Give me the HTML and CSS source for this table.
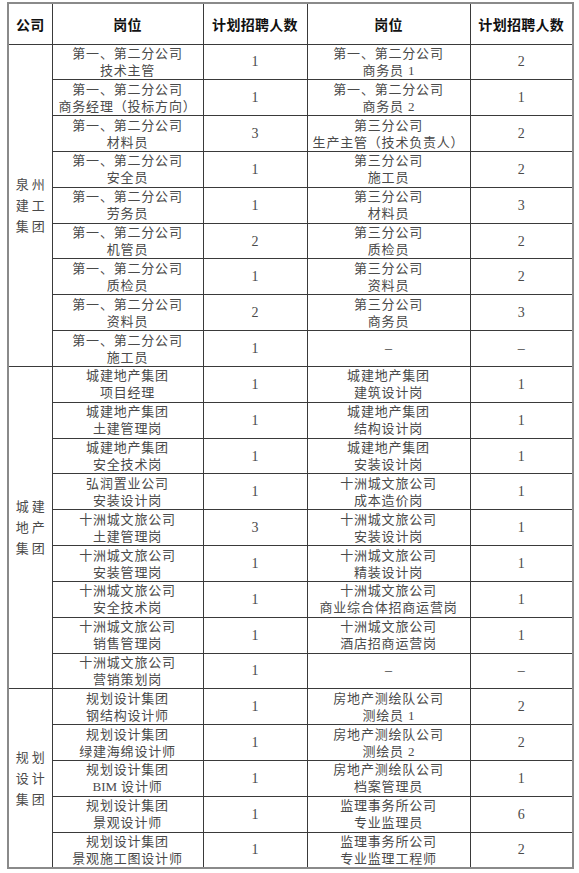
FILE: index.html
```html
<!DOCTYPE html>
<html lang="zh">
<head>
<meta charset="utf-8">
<title>招聘计划</title>
<link rel="stylesheet" href="styles.css">
</head>
<body>
<table class="plan">
  <colgroup>
    <col class="c-co"><col class="c-pos"><col class="c-num"><col class="c-pos2"><col class="c-num2">
  </colgroup>
  <thead>
    <tr class="head">
      <th>公司</th><th>岗位</th><th>计划招聘人数</th><th>岗位</th><th>计划招聘人数</th>
    </tr>
  </thead>
  <tbody>
    <tr>
      <td class="group" rowspan="9">泉州<br>建工<br>集团</td>
      <td>第一、第二分公司<br>技术主管</td><td class="num">1</td>
      <td>第一、第二分公司<br>商务员 <span class="d">1</span></td><td class="num">2</td>
    </tr>
    <tr>
      <td>第一、第二分公司<br>商务经理（投标方向）</td><td class="num">1</td>
      <td>第一、第二分公司<br>商务员 <span class="d">2</span></td><td class="num">1</td>
    </tr>
    <tr>
      <td>第一、第二分公司<br>材料员</td><td class="num">3</td>
      <td>第三分公司<br>生产主管（技术负责人）</td><td class="num">2</td>
    </tr>
    <tr>
      <td>第一、第二分公司<br>安全员</td><td class="num">1</td>
      <td>第三分公司<br>施工员</td><td class="num">2</td>
    </tr>
    <tr>
      <td>第一、第二分公司<br>劳务员</td><td class="num">1</td>
      <td>第三分公司<br>材料员</td><td class="num">3</td>
    </tr>
    <tr>
      <td>第一、第二分公司<br>机管员</td><td class="num">2</td>
      <td>第三分公司<br>质检员</td><td class="num">2</td>
    </tr>
    <tr>
      <td>第一、第二分公司<br>质检员</td><td class="num">1</td>
      <td>第三分公司<br>资料员</td><td class="num">2</td>
    </tr>
    <tr>
      <td>第一、第二分公司<br>资料员</td><td class="num">2</td>
      <td>第三分公司<br>商务员</td><td class="num">3</td>
    </tr>
    <tr>
      <td>第一、第二分公司<br>施工员</td><td class="num">1</td>
      <td class="num">–</td><td class="num">–</td>
    </tr>

    <tr>
      <td class="group" rowspan="9">城建<br>地产<br>集团</td>
      <td>城建地产集团<br>项目经理</td><td class="num">1</td>
      <td>城建地产集团<br>建筑设计岗</td><td class="num">1</td>
    </tr>
    <tr>
      <td>城建地产集团<br>土建管理岗</td><td class="num">1</td>
      <td>城建地产集团<br>结构设计岗</td><td class="num">1</td>
    </tr>
    <tr>
      <td>城建地产集团<br>安全技术岗</td><td class="num">1</td>
      <td>城建地产集团<br>安装设计岗</td><td class="num">1</td>
    </tr>
    <tr>
      <td>弘润置业公司<br>安装设计岗</td><td class="num">1</td>
      <td>十洲城文旅公司<br>成本造价岗</td><td class="num">1</td>
    </tr>
    <tr>
      <td>十洲城文旅公司<br>土建管理岗</td><td class="num">3</td>
      <td>十洲城文旅公司<br>安装设计岗</td><td class="num">1</td>
    </tr>
    <tr>
      <td>十洲城文旅公司<br>安装管理岗</td><td class="num">1</td>
      <td>十洲城文旅公司<br>精装设计岗</td><td class="num">1</td>
    </tr>
    <tr>
      <td>十洲城文旅公司<br>安全技术岗</td><td class="num">1</td>
      <td>十洲城文旅公司<br>商业综合体招商运营岗</td><td class="num">1</td>
    </tr>
    <tr>
      <td>十洲城文旅公司<br>销售管理岗</td><td class="num">1</td>
      <td>十洲城文旅公司<br>酒店招商运营岗</td><td class="num">1</td>
    </tr>
    <tr>
      <td>十洲城文旅公司<br>营销策划岗</td><td class="num">1</td>
      <td class="num">–</td><td class="num">–</td>
    </tr>

    <tr>
      <td class="group" rowspan="5">规划<br>设计<br>集团</td>
      <td>规划设计集团<br>钢结构设计师</td><td class="num">1</td>
      <td>房地产测绘队公司<br>测绘员 <span class="d">1</span></td><td class="num">2</td>
    </tr>
    <tr>
      <td>规划设计集团<br>绿建海绵设计师</td><td class="num">1</td>
      <td>房地产测绘队公司<br>测绘员 <span class="d">2</span></td><td class="num">2</td>
    </tr>
    <tr>
      <td>规划设计集团<br><span class="d">BIM</span> 设计师</td><td class="num">1</td>
      <td>房地产测绘队公司<br>档案管理员</td><td class="num">1</td>
    </tr>
    <tr>
      <td>规划设计集团<br>景观设计师</td><td class="num">1</td>
      <td>监理事务所公司<br>专业监理员</td><td class="num">6</td>
    </tr>
    <tr>
      <td>规划设计集团<br>景观施工图设计师</td><td class="num">1</td>
      <td>监理事务所公司<br>专业监理工程师</td><td class="num">2</td>
    </tr>
  </tbody>
</table>
</body>
</html>
```

FILE: styles.css
```css
html, body {
  background: #ffffff;
}
body {
  margin: 2px 0 0 7px;
  font-family: "Liberation Serif", "Noto Sans CJK SC", serif;
}
.plan {
  border-collapse: collapse;
  table-layout: fixed;
  width: 565px;
  border: 2px solid #8a8a8a;
}
.c-co { width: 44px; }
.c-pos { width: 151px; }
.c-num { width: 104px; }
.c-pos2 { width: 163px; }
.c-num2 { width: 103px; }

.plan th,
.plan td {
  border: 1px solid #3a3a3a;
  padding: 0;
  text-align: center;
  vertical-align: middle;
  overflow: hidden;
}
.head {
  height: 41px;
}
.head th {
  font-family: "Liberation Serif", "Noto Sans CJK SC", serif;
  font-weight: 700;
  font-size: 14px;
  letter-spacing: 0.3px;
  color: #111111;
  border-top: 2px solid #8a8a8a;
}
.plan tbody tr {
  height: 35.83px;
}
.plan td {
  font-size: 13px;
  line-height: 17px;
  letter-spacing: 0.8px;
  color: #4a4a4a;
}
.plan td.num {
  font-size: 14px;
  letter-spacing: 0;
}
.plan td.group {
  font-size: 13px;
  line-height: 21px;
  letter-spacing: 3px;
  padding-left: 3px;
}
.d {
  letter-spacing: 0;
}
```
